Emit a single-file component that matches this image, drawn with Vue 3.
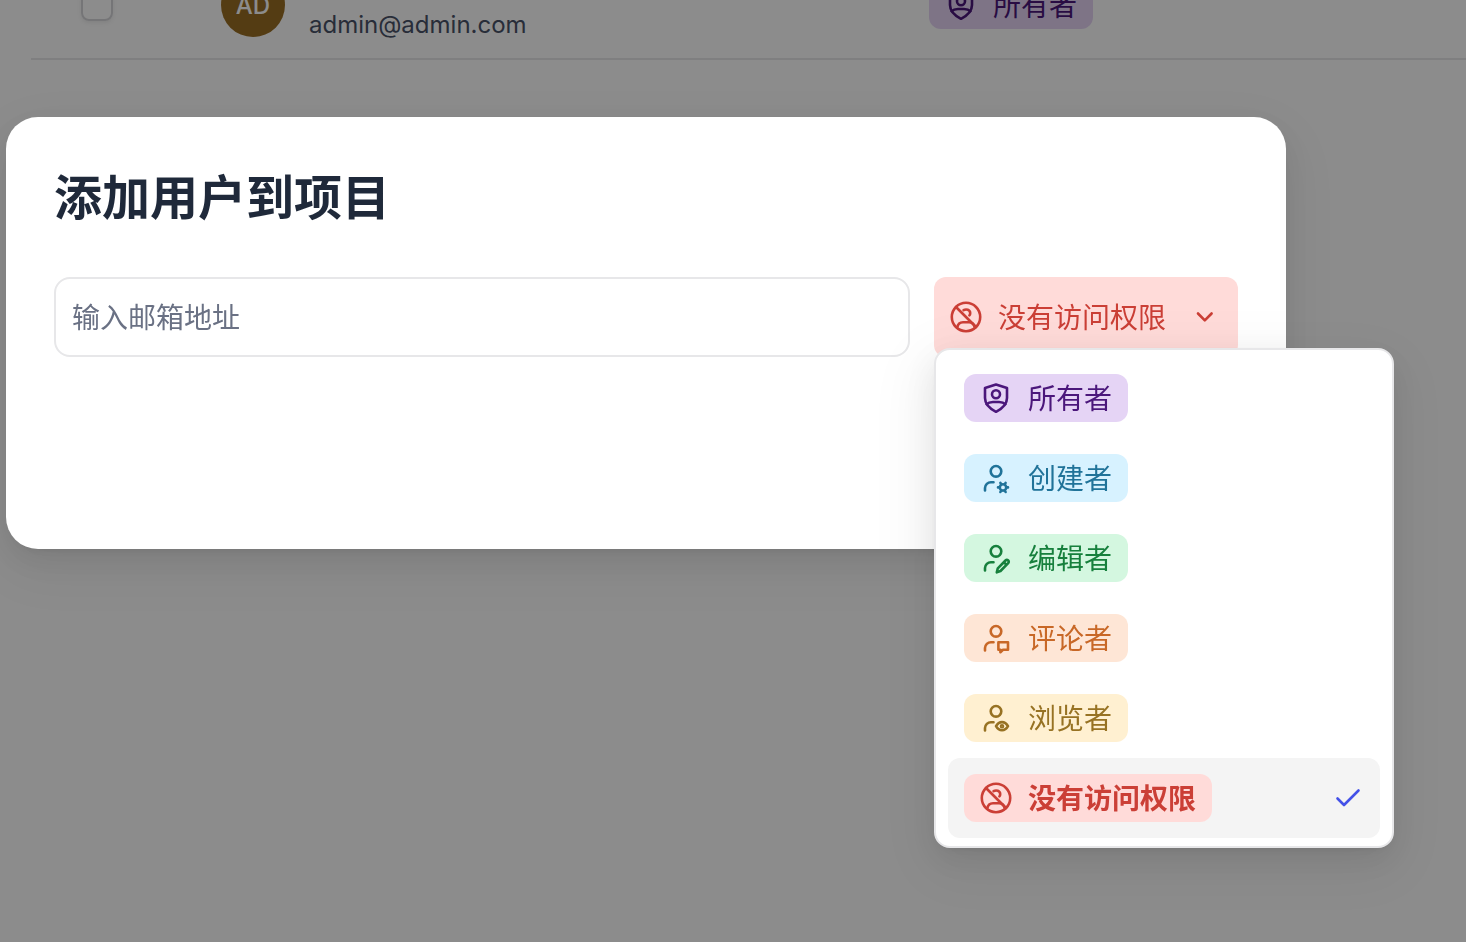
<script setup>
import { ref, computed } from 'vue';

const email = ref("");
const open = ref(true);
const selected = ref("no-access");

const roles = [
    { id: "owner", label: "所有者" },
    { id: "creator", label: "创建者" },
    { id: "editor", label: "编辑者" },
    { id: "commenter", label: "评论者" },
    { id: "viewer", label: "浏览者" },
    { id: "no-access", label: "没有访问权限" },
];

const person = "M5 28.5V26A6 6 0 0 1 11 20.2H13.5M21.3 9.3A5.3 5.3 0 1 1 10.7 9.3A5.3 5.3 0 1 1 21.3 9.3Z";

const icons = {
    owner: ["M16 2.5L27 6V16C27 22.5 22.5 26.5 16 29.8C9.5 26.5 5 22.5 5 16V6Z", "M20 12.2A4 4 0 1 1 12 12.2A4 4 0 1 1 20 12.2Z", "M6.5 22.2C8.5 20.3 10.5 20 13 20H19C21.5 20 23.5 20.3 25.5 22.2"],
    creator: [person, "M23 22.2A3.2 3.2 0 1 1 23 28.6A3.2 3.2 0 1 1 23 22.2ZM21.3 22.5L20.4 20.8M24.7 22.5L25.6 20.8M19.8 25.4H18M26.2 25.4H28M21.3 28.3L20.4 30M24.7 28.3L25.6 30"],
    editor: [person, "M16.8 30.3L17.8 26.3L25.5 18.5A1.9 1.9 0 0 1 28.2 21.2L20.5 29ZM24 20.3L26.3 22.6"],
    commenter: [person, "M18.4 20.3H28V27.8H23L20.4 30.2V27.8H18.4Z"],
    viewer: [person, "M16 24.2C19 18.8 25 18.8 28 24.2C25 29.6 19 29.6 16 24.2ZM23 24.2A1 1 0 1 1 21 24.2A1 1 0 1 1 23 24.2Z"],
    "no-access": ["M30.2 16A14.2 14.2 0 1 1 1.8 16A14.2 14.2 0 1 1 30.2 16Z", "M6 6L26 26", "M7.3 26.3C8 22.5 10 21.2 13 21.2H19C22 21.2 24 22.5 24.7 26.3", "M13.6 9.2C16.2 7.6 20 8.8 20.2 12C20.2 13 20 13.8 19.4 14.4"],
};

const current = computed(() => roles.find((role) => role.id === selected.value));

function pick(role) {
    selected.value = role.id;
    open.value = false;
}
</script>


<template>
    <main class="page">
        <div class="member">
            <input type="checkbox" class="tick" aria-label="admin@admin.com">
            <span class="avatar">AD</span>
            <span class="mail">admin@admin.com</span>
            <span class="badge owner">
                <svg class="icon" viewBox="0 0 32 32">
                    <path v-for="d in icons.owner" :key="d" :d="d" />
                </svg>
                <span class="label">所有者</span>
            </span>
        </div>
    </main>

    <div class="overlay">
        <section class="modal" role="dialog" aria-labelledby="modal-title">
            <h1 id="modal-title">添加用户到项目</h1>

            <form class="invite" @submit.prevent>
                <input type="email" class="email" aria-label="输入邮箱地址" placeholder="输入邮箱地址" v-model="email">

                <div class="picker">
                    <button type="button" class="trigger" :class="current.id" :aria-expanded="open" @click="open = !open">
                        <svg class="icon" viewBox="0 0 32 32">
                            <path v-for="d in icons[current.id]" :key="d" :d="d" />
                        </svg>
                        <span class="label">{{ current.label }}</span>
                        <svg class="icon chevron" viewBox="0 0 32 32">
                            <path d="M8 12.5L14.8 19.3L21.6 12.5" />
                        </svg>
                    </button>

                    <ul v-if="open" class="menu">
                        <li v-for="role in roles" :key="role.id">
                            <button type="button" class="option" :class="{ active: role.id === selected }" @click="pick(role)">
                                <span class="badge" :class="role.id">
                                    <svg class="icon" viewBox="0 0 32 32">
                                        <path v-for="d in icons[role.id]" :key="d" :d="d" />
                                    </svg>
                                    <span class="label">{{ role.label }}</span>
                                </span>
                                <svg v-if="role.id === selected" class="icon check" viewBox="0 0 32 32">
                                    <path d="M5.5 16.5L12 23L26.5 8.5" />
                                </svg>
                            </button>
                        </li>
                    </ul>
                </div>
            </form>
        </section>
    </div>
</template>


<style>
body {
    margin: 0;
    overflow: hidden;
}
</style>

<style scoped>
.page,
.overlay,
button,
input {
    font-family: Inter, "Noto Sans CJK SC", sans-serif;
    font-size: 28px;
    box-sizing: border-box;
}

.page {
    min-height: 100vh;
    padding-left: 31px;
    background-color: #ffffff;
}

/* the list is scrolled, so its row starts above the window */
.member {
    display: flex;
    align-items: center;
    height: 106px;
    margin-top: -48px;
    padding-left: 50px;
    border-bottom: 2px solid #e7e7e9;
}

.tick {
    appearance: none;
    width: 32px;
    height: 32px;
    margin: 0;
    border: 2px solid #d5d5d9;
    border-radius: 8px;
    box-shadow: 0 2px 4px rgba(0, 0, 0, 0.08);
}

.avatar {
    display: flex;
    align-items: center;
    justify-content: center;
    width: 64px;
    height: 64px;
    margin-left: 108px;
    border-radius: 50%;
    background-color: #996d24;
    color: #ffffff;
    font-size: 24px;
    font-weight: 500;
}

.mail {
    width: 620px;
    padding-top: 38px;
    padding-left: 24px;
    box-sizing: border-box;
    color: #4a5268;
    font-size: 24px;
}

.member .badge {
    margin-left: 24px;
}

.overlay {
    position: fixed;
    inset: 0;
    padding: 117px 180px 0 6px;
    background-color: rgba(0, 0, 0, 0.45);
}

.modal {
    min-height: 432px;
    padding: 48px;
    box-sizing: border-box;
    border-radius: 32px;
    background-color: #ffffff;
    box-shadow: 0 6px 12px -8px rgba(0, 0, 0, 0.12), 0 12px 32px rgba(0, 0, 0, 0.08), 0 18px 56px 16px rgba(0, 0, 0, 0.05);
}

h1 {
    margin: 0 0 46px;
    color: #1f293a;
    font-size: 48px;
    font-weight: 700;
    line-height: 66px;
}

.invite {
    display: flex;
    gap: 24px;
}

.email {
    flex: 1;
    min-width: 0;
    height: 80px;
    padding: 2px 16px 0;
    border: 2px solid #e7e7e9;
    border-radius: 16px;
    color: #1f293a;
}

.email::placeholder {
    color: #6a7184;
    opacity: 1;
}

.picker {
    position: relative;
}

.trigger {
    display: flex;
    align-items: center;
    gap: 16px;
    height: 80px;
    padding: 0 16px;
    border: none;
    border-radius: 12px;
}

.chevron {
    margin-left: 8px;
}

.menu {
    position: absolute;
    top: 71px;
    left: 0;
    width: 460px;
    margin: 0;
    padding: 8px 12px;
    box-sizing: border-box;
    border: 2px solid #e7e7e9;
    border-radius: 16px;
    background-color: #ffffff;
    box-shadow: 0 6px 12px -8px rgba(0, 0, 0, 0.12), 0 12px 32px rgba(0, 0, 0, 0.08), 0 18px 56px 16px rgba(0, 0, 0, 0.05);
    list-style: none;
}

.option {
    display: flex;
    align-items: center;
    justify-content: space-between;
    width: 100%;
    height: 80px;
    padding: 0 16px;
    border: none;
    border-radius: 12px;
    background-color: transparent;
}

.option.active {
    background-color: #f4f4f4;
    font-weight: 700;
}

.badge {
    display: flex;
    align-items: center;
    gap: 16px;
    height: 48px;
    padding: 0 16px;
    border-radius: 12px;
}

.label {
    padding-top: 2px;
    line-height: 40px;
}

.icon {
    flex: none;
    width: 32px;
    height: 32px;
    fill: none;
    stroke: currentColor;
    stroke-width: 2.6;
    stroke-linecap: round;
    stroke-linejoin: round;
}

.check {
    color: #4351e8;
}

.owner {
    background-color: #e5d4f5;
    color: #4b177b;
}

.creator {
    background-color: #d7f2ff;
    color: #207399;
}

.editor {
    background-color: #d4f7e0;
    color: #17803d;
}

.commenter {
    background-color: #fee6d6;
    color: #c86827;
}

.viewer {
    background-color: #fff0d1;
    color: #977223;
}

.no-access {
    background-color: #ffdbd9;
    color: #cb3f36;
}
</style>
